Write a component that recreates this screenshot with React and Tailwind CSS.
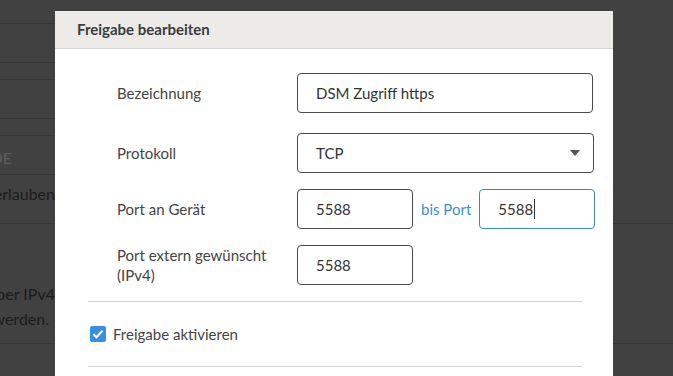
import { useState } from "react";

const font = { fontFamily: "Lato, 'Open Sans', sans-serif" };

function Field({ value, focused, className = "" }) {
  return (
    <div
      className={`h-[40px] flex items-center px-[18px] rounded-[4px] border text-[15px] text-[#333] ${
        focused ? "border-[#3d86c6]" : "border-[#4a4a4a]"
      } ${className}`}
    >
      <span>{value}</span>
      {focused && <span className="w-px h-[20px] bg-[#333] ml-px" />}
    </div>
  );
}

function Row({ label, children, className = "" }) {
  return (
    <div className={`flex items-center ${className}`}>
      <div className="w-[242px] shrink-0 pl-[62px] pr-[12px] text-[15px] leading-[20px] text-[#444]">{label}</div>
      <div className="flex items-center">{children}</div>
    </div>
  );
}

export default function App() {
  const [enabled, setEnabled] = useState(true);

  return (
    <div className="relative w-full h-[376px] overflow-hidden bg-[#414141]" style={font}>
      {/* dimmed page behind the dialog */}
      <div className="flex flex-col text-[16px] text-[#1c1c1c]">
        <div className="h-[24px]"><div className="w-[300px] h-full border-b border-[#363636]" /></div>
        <div className="h-[39px]"><div className="w-[300px] h-full border-b border-[#363636]" /></div>
        <div className="h-[17px]"><div className="w-[300px] h-full border-b border-[#363636]" /></div>
        <div className="h-[39px]"><div className="w-[300px] h-full border-b border-[#363636]" /></div>
        <div className="h-[17px]"><div className="w-[300px] h-full border-b border-[#363636]" /></div>
        <div className="h-[39px]">
          <div className="w-[55px] h-full border-b border-[#363636] flex items-center justify-end pt-[5px] pr-[43px] text-[#5c5c5c] overflow-hidden whitespace-nowrap">
            CODE
          </div>
        </div>
        <div className="h-[49px] border-b border-[#363636]">
          <div className="w-[55px] overflow-hidden whitespace-nowrap flex justify-end pt-[7px]">Zugriff erlauben</div>
        </div>
        <div className="h-[120px] border-b border-[#363636]">
          <div className="w-[55px] overflow-hidden whitespace-nowrap flex flex-col items-end pt-[57px] leading-[25px]">
            <span>Freigabe über IPv4</span>
            <span className="pr-[6px]">werden.</span>
          </div>
        </div>
      </div>

      {/* dialog */}
      <div className="absolute left-[55px] top-[11px] w-[558px] h-[400px] bg-white">
        <div className="h-[38px] flex items-center px-[22px] bg-[#ecebe7] border-b border-[#d6d6d6] text-[15px] font-bold text-[#3a3d42]">
          Freigabe bearbeiten
        </div>

        <div className="pt-[24px]">
          <Row label="Bezeichnung">
            <Field value="DSM Zugriff https" className="w-[296px]" />
          </Row>

          <Row label="Protokoll" className="mt-[20px]">
            <div className="w-[297px] h-[40px] flex items-center justify-between pl-[18px] pr-[13px] rounded-[4px] border border-[#4a4a4a] text-[15px] text-[#333]">
              <span>TCP</span>
              <svg width="10" height="6" viewBox="0 0 10 6">
                <path d="M0 0h10L5 6z" fill="#555" />
              </svg>
            </div>
          </Row>

          <Row label="Port an Gerät" className="mt-[16px]">
            <Field value="5588" className="w-[116px]" />
            <span className="mx-[8px] text-[15px] text-[#3d8fd1]">bis Port</span>
            <Field value="5588" focused className="w-[116px]" />
          </Row>

          <Row label="Port extern gewünscht (IPv4)" className="mt-[16px]">
            <Field value="5588" className="w-[116px]" />
          </Row>

          <div className="ml-[33px] w-[494px] mt-[16px] border-t border-[#d4d4d4]" />

          <label className="ml-[35px] h-[64px] flex items-center gap-[7px] text-[15px] text-[#444] cursor-pointer">
            <button
              type="button"
              onClick={() => setEnabled(!enabled)}
              className={`w-[16px] h-[16px] rounded-[2px] flex items-center justify-center ${
                enabled ? "bg-[#3a8ee6]" : "border border-[#888] bg-white"
              }`}
            >
              {enabled && (
                <svg width="12" height="10" viewBox="0 0 12 10">
                  <path d="M1.5 5.2l3 3L10.5 1.8" stroke="#fff" strokeWidth="2" fill="none" />
                </svg>
              )}
            </button>
            Freigabe aktivieren
          </label>

          <div className="ml-[33px] w-[494px] border-t border-[#d4d4d4]" />
        </div>
      </div>
    </div>
  );
}
